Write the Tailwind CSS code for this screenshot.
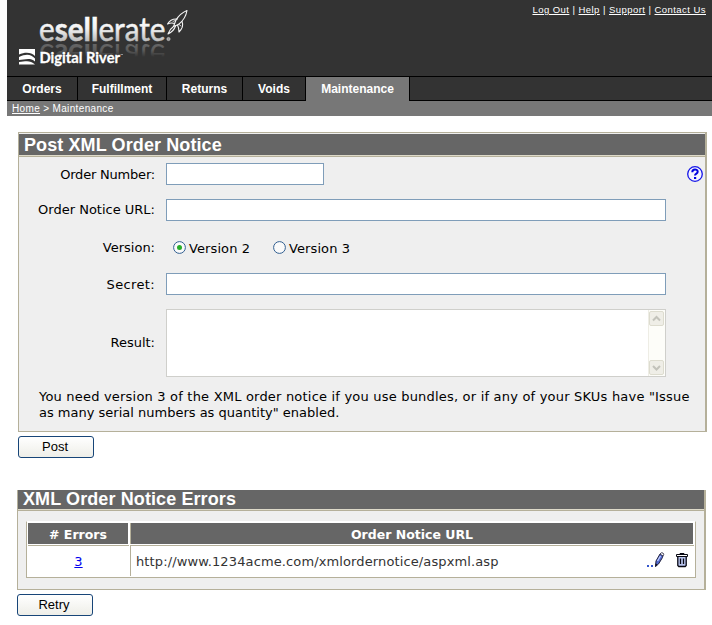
<!DOCTYPE html>
<html lang="en">
<head>
<meta charset="utf-8">
<title>eSellerate - Maintenance</title>
<script src="https://cdn.jsdelivr.net/npm/@tailwindcss/browser@4"></script>
</head>
<body class="w-[712px] h-[625px] overflow-hidden bg-white text-black font-['DejaVu_Sans',sans-serif] text-[13px] leading-4">
<header class="ml-[7px] bg-[#333333]">
  <div class="flex h-[76px] justify-between">
    <svg class="block" width="190" height="76" viewBox="7 0 190 76" role="img" aria-label="esellerate Digital River">
      <defs>
        <linearGradient id="silver" x1="0" y1="16" x2="0" y2="41" gradientUnits="userSpaceOnUse"><stop offset="0" stop-color="#fff"/><stop offset=".5" stop-color="#f2f2f2"/><stop offset="1" stop-color="#bdbdbd"/></linearGradient>
        <linearGradient id="mirror" x1="0" y1="27" x2="0" y2="41" gradientUnits="userSpaceOnUse"><stop offset="0" stop-color="#fff" stop-opacity="0"/><stop offset=".5" stop-color="#fff" stop-opacity=".2"/><stop offset="1" stop-color="#fff" stop-opacity=".26"/></linearGradient>
      </defs>
      <g font-family="Lato" font-size="32">
        <text x="39" y="40.5" textLength="126.500" lengthAdjust="spacingAndGlyphs" fill="url(#silver)" stroke="url(#silver)" stroke-width=".5"><tspan>e</tspan><tspan font-weight="700">sell</tspan><tspan>erate</tspan></text>
        <text x="39" y="40.5" textLength="126.500" lengthAdjust="spacingAndGlyphs" fill="url(#mirror)" transform="matrix(1 0 0 -1 0 84)" aria-hidden="true"><tspan>e</tspan><tspan font-weight="700">sell</tspan><tspan>erate</tspan></text>
      </g>
      <circle cx="168.500" cy="39" r="1.600" fill="#999" stroke="#ddd" stroke-width=".6"/>
      <g fill="none" stroke="#f4f4f4" stroke-width="1.100" stroke-linejoin="round" stroke-linecap="round">
        <path d="M187 10.500C182 12.500 178.500 16 176 20L173.500 26.500L178.500 24.500C183 21 186 16.500 187 10.500Z"/>
        <path d="M177.500 19C172.500 18.500 169.500 20.500 167.500 24C171 22.500 173 23 174.500 23.500M182 21.500C183.500 25 182 29 179 32C179 29 178.500 27 177.500 25M173.500 26.500C170.500 28.500 169 31 168 34C171.500 32.500 174 30.500 175.500 26"/>
        <path d="M173 21.500L176 20M181 26L179 24.500" stroke-width=".8"/>
      </g>
      <path fill="#fff" d="M19 49H35V56C31 51.800 25 51.800 19 54.500ZM19 57C26 53.500 31 54 35 58.500V61.500C30 57 24 60 19 60ZM19 62C25 61.500 30 59.500 35 64.500H19Z"/>
      <text x="39.500" y="62.800" textLength="80.500" fill="#fff" font-family="Lato" font-size="15.5" font-weight="700" stroke="#fff" stroke-width=".3" lengthAdjust="spacingAndGlyphs">Digital River</text>
      <path d="M120.500 54.500h2.500" stroke="#aaa" stroke-width=".8"/>
    </svg>
    <div class="mr-[6px] mt-[4px] h-3 whitespace-nowrap font-['Liberation_Sans',sans-serif] text-[9.5px] leading-3 tracking-[0.45px] text-white"><a href="#" class="underline">Log Out</a> | <a href="#" class="underline">Help</a> | <a href="#" class="underline">Support</a> | <a href="#" class="underline">Contact Us</a></div>
  </div>
  <nav class="flex h-[25px] font-['Liberation_Sans',sans-serif] text-[12px] font-bold leading-[25px] text-white">
    <a class="w-[71px] border-y border-r border-black text-center">Orders</a>
    <a class="w-[89px] border-y border-r border-black text-center">Fulfillment</a>
    <a class="w-[76px] border-y border-r border-black text-center">Returns</a>
    <a class="w-[63px] border-y border-r border-black text-center">Voids</a>
    <a class="w-[104px] border-t border-r border-black bg-[#777777] text-center">Maintenance</a>
    <div class="flex-1 border-y border-black"></div>
  </nav>
  <div class="h-[15px] bg-[#777777] pl-[5px] font-['Liberation_Sans',sans-serif] text-[10px] leading-[15px] tracking-[0.35px] text-white"><a href="#" class="underline">Home</a> &gt; Maintenance</div>
</header>

<main>
  <section class="ml-[18px] mt-[16px] h-[300px] w-[689px] border border-r-2 border-[#b5b09a] bg-[#efefef]">
    <h1 class="mt-px h-[21px] bg-[#666666] pl-[5px] font-['Liberation_Sans',sans-serif] text-[18px] font-bold leading-[23px] tracking-[0.1px] text-white">Post XML Order Notice</h1>
    <div class="h-px bg-[#dedac9]"></div>
    <div class="h-px bg-[#b5b09a]"></div>
    <div class="grid grid-cols-[136px_500px] grid-rows-[22px_36px_52px_22px_82px] gap-x-[11px] pt-[6px]">
      <label class="text-right leading-6 tracking-[-0.2px]">Order Number:</label>
      <div class="flex justify-between">
        <input aria-label="Order Number" class="h-[22px] w-[158px] border border-[#7f9db9] bg-white">
        <svg class="relative left-[38px] top-[2px]" width="18" height="18" viewBox="0 0 18 18"><circle cx="9" cy="9" r="7.300" fill="#f4f4ff" stroke="#1717e8" stroke-width="1.300"/><path d="M6.300 7.200C6.300 3.700 11.700 3.700 11.700 6.800C11.700 8.700 9 8.500 9 10.600" fill="none" stroke="#0000e0" stroke-width="2"/><path d="M8 12h2.200v2H8z" fill="#0000e0"/></svg>
      </div>
      <label class="self-end text-right leading-[22px]">Order Notice URL:</label>
      <input aria-label="Order Notice URL" class="h-[22px] self-end border border-[#7f9db9] bg-white">
      <label class="self-center pt-px text-right">Version:</label>
      <div class="flex h-4 items-center self-center pl-[7px]">
        <svg width="13" height="13" viewBox="0 0 13 13"><circle cx="6.500" cy="6.500" r="5.900" fill="#fafafa" stroke="#315f91"/><circle cx="6.500" cy="6.500" r="2.500" fill="#27ad27"/></svg>
        <span class="ml-[3px] mt-[3px] w-[84px] tracking-[0.1px]">Version 2</span>
        <svg width="13" height="13" viewBox="0 0 13 13"><circle cx="6.500" cy="6.500" r="5.900" fill="#fafafa" stroke="#315f91"/></svg>
        <span class="ml-[3px] mt-[3px] tracking-[0.1px]">Version 3</span>
      </div>
      <label class="text-right leading-[23px] tracking-[0.35px]">Secret:</label>
      <input aria-label="Secret" class="h-[22px] border border-[#7f9db9] bg-white">
      <label class="self-end text-right leading-[68px]">Result:</label>
      <div class="flex h-[68px] justify-end self-end border border-[#cfcfcb] bg-white">
        <div class="flex w-[17px] flex-col justify-between border-l border-[#eeede5] bg-[#fdfdf9]">
          <svg width="16" height="17" viewBox="0 0 16 17"><rect x=".5" y="1.500" width="14" height="14" rx="1.500" fill="#efeee7" stroke="#dddccf"/><path d="M4 10.500L7.500 7L11 10.500" fill="none" stroke="#c3c3bb" stroke-width="2"/></svg>
          <svg width="16" height="17" viewBox="0 0 16 17"><rect x=".5" y="1.500" width="14" height="14" rx="1.500" fill="#efeee7" stroke="#dddccf"/><path d="M4 7L7.500 10.500L11 7" fill="none" stroke="#c3c3bb" stroke-width="2"/></svg>
        </div>
      </div>
    </div>
    <p class="mt-[12px] pl-5 whitespace-nowrap"><span class="tracking-[0.2px]">You need version 3 of the XML order notice if you use bundles, or if any of your SKUs have "Issue</span><br><span>as many serial numbers as quantity" enabled.</span></p>
  </section>
  <button class="ml-[18px] mt-[4px] block h-[22px] w-[76px] rounded-[3px] border border-[#174578] bg-linear-to-b from-white to-[#eeeee8] pr-[2px] font-['Liberation_Sans',sans-serif] text-[13px] leading-5">Post</button>

  <section class="ml-[17px] mt-[32px] h-[100px] w-[689px] border border-t-0 border-r-2 border-[#b5b09a] bg-[#efefef]">
    <h2 class="h-[19px] bg-[#666666] pl-[5px] font-['Liberation_Sans',sans-serif] text-[18px] font-bold leading-[18px] tracking-[0.1px] text-white">XML Order Notice Errors</h2>
    <div class="h-px bg-[#dedac9]"></div>
    <div class="h-px bg-[#b5b09a]"></div>
    <div class="ml-[8px] mt-[10px] grid h-[57px] w-[670px] grid-cols-[101px_564px] grid-rows-[21px_31px] gap-px border border-[#b5b09a] border-t-white bg-white pl-px pt-px">
      <div class="mr-px bg-[#666666] text-center text-[12.5px] font-bold leading-[23px] text-white">#&nbsp;Errors</div>
      <div class="mr-px border-l border-[#b5b09a] bg-[#666666] text-center text-[12.5px] font-bold leading-[23px] text-white">Order Notice URL</div>
      <div class="border-t border-[#b5b09a] pt-px text-center leading-[30px]"><a href="#" class="text-[#0000ee] underline">3</a></div>
      <div class="flex items-center border-l border-t border-[#b5b09a] pl-[5px] text-[#333]">
        <span class="flex-1 pt-px tracking-[0.12px]">http://www.1234acme.com/xmlordernotice/aspxml.asp</span>
        <svg class="mr-[10px] -mt-[3px]" width="18" height="18" viewBox="0 0 18 18"><path fill="#3355cc" d="M0 14h2v2H0zM4 14h2v2H4z"/><path d="M8.500 15.500L9 10L13 3L16 4.500L15.500 6.500L11.500 13Z" fill="#5068cf" stroke="#22223f" stroke-width="1"/><path d="M10.500 10L13.500 5" stroke="#c4d0ff" stroke-width="1.300"/><path d="M13 3Q14 1 16 2Q17.500 3 16 5Z" fill="#fff" stroke="#22223f" stroke-width=".8"/><path d="M8.500 16V12.500L10.500 13.500Z" fill="#101020"/></svg>
        <svg class="mr-[5px] -mt-[2px]" width="14" height="16" viewBox="0 0 14 16"><path d="M2.500 4h9v10H3.500L2.500 13Z" fill="#b8c4ee"/><path fill="none" stroke="#080812" d="M5 2.500V1.500H9V2.500M1.500 4.500V2.500H12.500V4.500M1.500 4.500H12.500"/><path fill="none" stroke="#080812" stroke-width="1.300" d="M2.800 5V13.500L3.800 14.500H10.200L11.200 13.500V5M5.500 6.500V12M8.500 6.500V12"/></svg>
      </div>
    </div>
  </section>
  <button class="ml-[17px] mt-[4px] block h-[22px] w-[76px] rounded-[3px] border border-[#174578] bg-linear-to-b from-white to-[#eeeee8] pr-[2px] font-['Liberation_Sans',sans-serif] text-[13px] leading-5">Retry</button>
</main>
</body>
</html>
